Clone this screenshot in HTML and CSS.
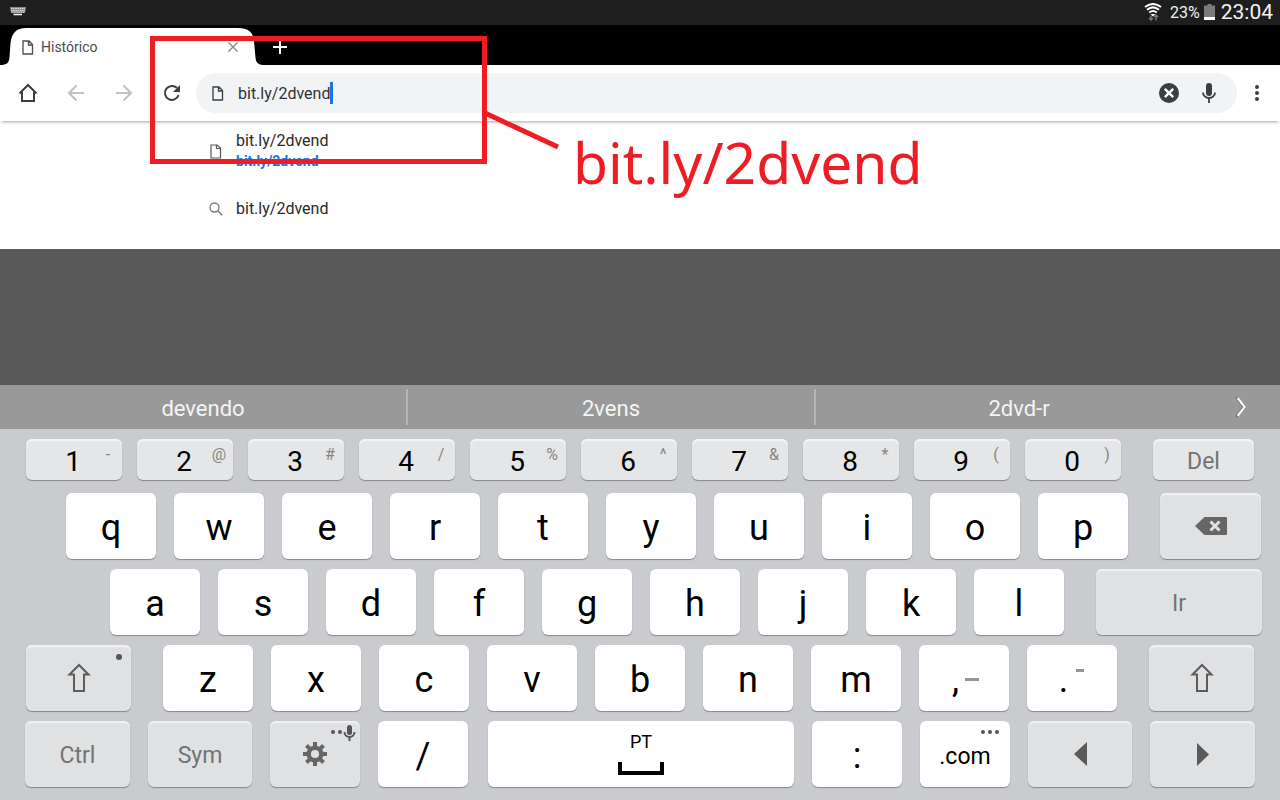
FILE: index.html
```html
<!DOCTYPE html>
<html lang="pt">
<head>
<meta charset="utf-8">
<meta name="viewport" content="width=device-width, initial-scale=1">
<title>Histórico</title>
<link rel="stylesheet" href="styles.css">
</head>
<body>
<div class="screen">
  <header class="status">
    <svg class="status-kbd" width="16" height="9" viewBox="0 0 16 9" aria-hidden="true"><path d="M0 0h16l-1 6H1z" fill="#8d8d8d"/><path d="M1 1.5h14M1 3.5h14M2 5.2h12" stroke="#e2e2e2" stroke-width="1" stroke-dasharray="1.4 .8"/><path d="M3.5 7.5h8.500" stroke="#fff" stroke-width="1.500"/></svg>
    <div class="status-right">
      <svg width="18" height="18" viewBox="0 0 18 18" fill="none" aria-hidden="true"><path d="M1 4Q9-2 17 4M3 6.800Q9 2 15 6.800M5.200 9.500Q9 6.500 12.800 9.500" stroke="#fff" stroke-width="2"/><path d="M6.500 11h5L9 13.500z" fill="#fff"/><path d="M7 17v-4.500M5 15l2 2 2-2M12 17.500V12M10 14l2-2 2 2" stroke="#777" stroke-width="1.500"/></svg>
      <span class="percent">23%</span>
      <svg width="11" height="16" viewBox="0 0 11 16" aria-hidden="true"><path d="M3.500 0h4v1.500H11V16H0V1.500h3.500z" fill="#7b7b7b"/><path d="M0 13h11v3H0z" fill="#fff"/></svg>
      <time class="clock">23:04</time>
    </div>
  </header>

  <nav class="tabs" aria-label="Guias">
    <div class="tab">
      <svg class="tab-shape" width="264" height="37" viewBox="0 0 264 37" aria-hidden="true"><path d="M0 37C7 37 9 35 9.500 29L10.500 15Q12 0 26 0H238Q253 0 254 13L255.500 30Q256 37 263 37Z" fill="#fff"/></svg>
      <div class="tab-content">
        <svg width="12" height="15" viewBox="0 0 12 15" fill="none" stroke="#4a4d51" stroke-width="1.300" aria-hidden="true"><path d="M1 1h6l3.500 3.500V14H1zM6.500 1v4h4"/></svg>
        <span class="tab-title">Histórico</span>
        <button class="plain" type="button" aria-label="Fechar guia"><svg width="12" height="12" viewBox="0 0 12 12" stroke="#85878a" stroke-width="1.400"><path d="M1.500 1.500l9 9M10.500 1.500l-9 9"/></svg></button>
      </div>
    </div>
    <button class="plain new-tab" type="button" aria-label="Nova guia"><svg width="14" height="14" viewBox="0 0 14 14" stroke="#fff" stroke-width="2"><path d="M7 0v14M0 7h14"/></svg></button>
  </nav>

  <div class="toolbar">
    <div class="nav-buttons">
      <button class="plain" type="button" aria-label="Página inicial"><svg width="20" height="20" viewBox="0 0 20 20" fill="none" stroke="#3b3e42" stroke-width="2"><path d="M1.500 10.500L10 2l8.500 8.500M4 9v9h12V9"/></svg></button>
      <button class="plain" type="button" aria-label="Voltar"><svg width="18" height="18" viewBox="0 0 18 18" fill="none" stroke="#c0c1c3" stroke-width="2"><path d="M17 9H2M9.500 1.500L2 9l7.500 7.500"/></svg></button>
      <button class="plain" type="button" aria-label="Avançar"><svg width="18" height="18" viewBox="0 0 18 18" fill="none" stroke="#c0c1c3" stroke-width="2"><path d="M1 9h15M8.500 1.500L16 9l-7.500 7.500"/></svg></button>
      <button class="plain" type="button" aria-label="Recarregar"><svg width="18" height="18" viewBox="0 0 18 18" fill="none"><path d="M15.600 11.200A7 7 0 1 1 14 4" stroke="#3b3e42" stroke-width="2"/><path d="M17 1v7h-7z" fill="#3b3e42"/></svg></button>
    </div>
    <div class="omnibox">
      <svg width="12" height="15" viewBox="0 0 12 15" fill="none" stroke="#3b3e42" stroke-width="1.300" aria-hidden="true"><path d="M1 1h6l3.500 3.500V14H1zM6.500 1v4h4"/></svg>
      <input class="url" type="text" value="bit.ly/2dvend" aria-label="Endereço"><span class="caret"></span>
      <div class="omnibox-actions">
        <button class="plain" type="button" aria-label="Limpar"><svg width="20" height="20" viewBox="0 0 20 20"><circle cx="10" cy="10" r="10" fill="#3b3e42"/><path d="M5.800 5.800l8.400 8.400M14.200 5.800l-8.400 8.400" stroke="#fff" stroke-width="2.400"/></svg></button>
        <button class="plain" type="button" aria-label="Pesquisa por voz"><svg width="14" height="20" viewBox="0 0 14 20" fill="none"><rect x="4" y="0" width="6" height="13" rx="3" fill="#3b3e42"/><path d="M1 9.500a6 5.500 0 0 0 12 0M7 15v5" stroke="#3b3e42" stroke-width="1.800"/></svg></button>
      </div>
    </div>
    <button class="plain menu" type="button" aria-label="Menu"><svg width="4" height="16" viewBox="0 0 4 16" fill="#3b3e42"><circle cx="2" cy="2" r="2"/><circle cx="2" cy="8" r="2"/><circle cx="2" cy="14" r="2"/></svg></button>
  </div>

  <main class="results">
    <a class="result" href="#site">
      <svg width="14" height="15" viewBox="0 0 14 15" fill="none" stroke="#55585c" stroke-width="1.200" aria-hidden="true"><path d="M2 1h6l3.500 3v10H2zM7.500 1v3.500h4"/></svg>
      <span class="result-text"><span class="result-title">bit.ly/2dvend</span><span class="result-url">bit.ly/2dvend</span></span>
    </a>
    <a class="result" href="#busca">
      <svg width="14" height="14" viewBox="0 0 14 14" fill="none" stroke="#77797c" stroke-width="1.300" aria-hidden="true"><circle cx="5.500" cy="5.500" r="4.500"/><path d="M8.700 8.700L13.200 13.200" stroke-width="1.600"/></svg>
      <span class="result-text"><span class="result-title">bit.ly/2dvend</span></span>
    </a>
  </main>

  <div class="scrim"></div>

  <section class="keyboard" aria-label="Teclado">
    <div class="predictions">
      <button class="word" type="button">devendo</button>
      <button class="word" type="button">2vens</button>
      <button class="word" type="button">2dvd-r</button>
      <button class="more" type="button" aria-label="Mais sugestões"><svg width="12" height="22" viewBox="0 0 12 22" fill="none"><path d="M1.500 1.500L8.500 11l-7 9.500" stroke="#444" stroke-width="2"/><path d="M2.500 2L9.500 11l-7 9" stroke="#fff" stroke-width="2.200"/></svg></button>
    </div>

    <div class="row row-numbers">
      <div class="group group-10">
        <button class="key num" type="button">1<span class="hint">-</span></button>
        <button class="key num" type="button">2<span class="hint">@</span></button>
        <button class="key num" type="button">3<span class="hint">#</span></button>
        <button class="key num" type="button">4<span class="hint">/</span></button>
        <button class="key num" type="button">5<span class="hint">%</span></button>
        <button class="key num" type="button">6<span class="hint">^</span></button>
        <button class="key num" type="button">7<span class="hint">&amp;</span></button>
        <button class="key num" type="button">8<span class="hint">*</span></button>
        <button class="key num" type="button">9<span class="hint">(</span></button>
        <button class="key num" type="button">0<span class="hint">)</span></button>
      </div>
      <button class="key pale side-101 label" type="button">Del</button>
    </div>

    <div class="row row-q">
      <div class="group group-q">
        <button class="key" type="button">q</button><button class="key" type="button">w</button><button class="key" type="button">e</button><button class="key" type="button">r</button><button class="key" type="button">t</button><button class="key" type="button">y</button><button class="key" type="button">u</button><button class="key" type="button">i</button><button class="key" type="button">o</button><button class="key" type="button">p</button>
      </div>
      <button class="key fn side-101" type="button" aria-label="Apagar"><svg width="32" height="18" viewBox="0 0 32 18"><path d="M0 9L9.500 0H31q1 0 1 1v16q0 1-1 1H9.500z" fill="#666"/><path d="M15.500 4.500l9 9M24.500 4.500l-9 9" stroke="#e0e1e3" stroke-width="3"/></svg></button>
    </div>

    <div class="row row-a">
      <div class="group group-a">
        <button class="key" type="button">a</button><button class="key" type="button">s</button><button class="key" type="button">d</button><button class="key" type="button">f</button><button class="key" type="button">g</button><button class="key" type="button">h</button><button class="key" type="button">j</button><button class="key" type="button">k</button><button class="key" type="button">l</button>
      </div>
      <button class="key fn side-166 label" type="button">Ir</button>
    </div>

    <div class="row row-z">
      <button class="key fn side-105" type="button" aria-label="Maiúsculas"><svg width="24" height="30" viewBox="0 0 24 30" fill="none" stroke="#5c5c5c" stroke-width="2"><path d="M12 2L2.500 11.500H7V28h10V11.500h4.500z"/></svg><span class="dot"></span></button>
      <div class="group group-a">
        <button class="key" type="button">z</button><button class="key" type="button">x</button><button class="key" type="button">c</button><button class="key" type="button">v</button><button class="key" type="button">b</button><button class="key" type="button">n</button><button class="key" type="button">m</button><button class="key comma" type="button">,<span class="alt dash-long"></span></button><button class="key period" type="button">.<span class="alt dash-short"></span></button>
      </div>
      <button class="key fn side-105" type="button" aria-label="Maiúsculas"><svg width="24" height="30" viewBox="0 0 24 30" fill="none" stroke="#5c5c5c" stroke-width="2"><path d="M12 2L2.500 11.500H7V28h10V11.500h4.500z"/></svg></button>
    </div>

    <div class="row row-space">
      <button class="key fn side-105 label" type="button">Ctrl</button>
      <button class="key fn side-104 label" type="button">Sym</button>
      <button class="key fn" type="button" aria-label="Configurações"><svg width="24" height="24" viewBox="0 0 24 24" fill="none" stroke="#666"><circle cx="12" cy="12" r="6.300" stroke-width="4.500"/><path d="M12 0v4.500M12 19.500V24M0 12h4.500M19.500 12H24M3.500 3.500l3.200 3.200M17.300 17.300l3.200 3.200M3.500 20.500l3.200-3.200M17.300 6.700l3.200-3.200" stroke-width="4"/></svg><svg class="corner corner-mic" width="26" height="16" viewBox="0 0 26 16" fill="#555"><circle cx="3" cy="7" r="2"/><circle cx="10" cy="7" r="2"/><rect x="17" y="0" width="5" height="10" rx="2.500"/><path d="M14.500 7a5 5 0 0 0 10 0M19.500 12v4" fill="none" stroke="#555" stroke-width="2"/></svg></button>
      <button class="key" type="button">/</button>
      <button class="key space" type="button">PT<svg width="46" height="13" viewBox="0 0 46 13" fill="none" stroke="#000" stroke-width="4" aria-hidden="true"><path d="M2 0v11h42V0"/></svg></button>
      <button class="key" type="button">:</button>
      <button class="key com" type="button">.com<svg class="corner corner-dots" width="18" height="4" viewBox="0 0 18 4" fill="#555" aria-hidden="true"><circle cx="2" cy="2" r="2"/><circle cx="9" cy="2" r="2"/><circle cx="16" cy="2" r="2"/></svg></button>
      <button class="key fn side-104" type="button" aria-label="Cursor à esquerda"><svg width="13" height="24" viewBox="0 0 13 24" fill="#5a5a5a"><path d="M13 0v24L0 12z"/></svg></button>
      <button class="key fn side-105" type="button" aria-label="Cursor à direita"><svg width="12" height="23" viewBox="0 0 12 23" fill="#5a5a5a"><path d="M0 0v23l12-11.500z"/></svg></button>
    </div>
  </section>

  <div class="callout-box"></div>
  <svg class="callout-line" width="76" height="40" viewBox="0 0 76 40" aria-hidden="true"><path d="M0 2L73 36" stroke="#ee1c25" stroke-width="5"/></svg>
  <p class="callout-text">bit.ly/2dvend</p>
</div>
</body>
</html>
```

FILE: styles.css
```css
* { box-sizing: border-box; }

body {
  margin: 0;
  font-family: Roboto, "Noto Sans", sans-serif;
  color: #27292c;
}

button { font: inherit; color: inherit; border: 0; cursor: pointer; }

svg { display: block; flex: none; }

.plain {
  display: flex;
  align-items: center;
  justify-content: center;
  padding: 0;
  background: none;
}

.screen {
  position: relative;
  display: flex;
  flex-direction: column;
  min-height: 100vh;
  overflow: hidden;
}

/* Status bar */
.status {
  display: flex;
  align-items: center;
  justify-content: space-between;
  height: 25px;
  padding: 0 7px 2px 10px;
  background: #1e1e1e;
  color: #f2f2f2;
}

.status-right { display: flex; align-items: center; }
.percent { margin: 2px 4px 0 8px; font-size: 16px; }
.clock { margin-left: 6px; font-size: 21px; line-height: 24px; }

/* Tab strip */
.tabs {
  display: flex;
  align-items: flex-end;
  height: 40px;
  background: #000;
}

.tab { display: grid; }
.tab-shape, .tab-content { grid-area: 1 / 1; }

.tab-content {
  display: flex;
  align-items: center;
  gap: 6px;
  padding: 1px 25px 0 22px;
}

.tab-title { flex: 1; padding-left: 1px; font-size: 14px; color: #4a4d51; }
.new-tab { align-self: center; margin: 4px 0 0 9px; }

/* Toolbar */
.toolbar {
  position: relative;
  display: flex;
  align-items: center;
  height: 56px;
  padding-right: 21px;
  background: #fff;
  box-shadow: 0 3px 3px -2px rgba(0, 0, 0, .35);
}

.nav-buttons { display: flex; padding: 0 0 0 4px; }
.nav-buttons .plain { width: 48px; height: 48px; }

.omnibox {
  display: flex;
  flex: 1;
  align-items: center;
  height: 40px;
  padding: 0 21px 0 16px;
  border-radius: 20px;
  background: #f1f3f4;
}

.url {
  width: 92px;
  margin-left: 14px;
  padding: 0;
  border: 0;
  outline: 0;
  background: none;
  font: 16px Roboto, "Noto Sans", sans-serif;
  color: #303236;
}

.caret { width: 3px; height: 22px; background: #1a73e8; }
.omnibox-actions { display: flex; align-items: center; gap: 23px; margin-left: auto; }
.menu { margin-left: 18px; }

/* Suggestions */
.results {
  display: flex;
  flex-direction: column;
  padding-bottom: 12px;
  background: #fefefe;
}

.result {
  display: flex;
  align-items: center;
  gap: 13px;
  min-height: 57px;
  padding: 1px 0 0 209px;
  color: inherit;
  text-decoration: none;
}

.result:first-child { height: 59px; }
.result-text { display: flex; flex-direction: column; }
.result-title { font-size: 16px; line-height: 20px; }
.result-url { font-size: 14px; line-height: 20px; font-weight: 700; color: #1a73e8; }

.scrim { flex: 1; min-height: 40px; background: #595959; }

/* Keyboard */
.keyboard {
  display: flex;
  flex-direction: column;
  gap: 10px;
  padding-bottom: 13px;
  background: #cacbcf;
}

.predictions {
  display: grid;
  grid-template-columns: 408fr 408fr 408fr 56fr;
  height: 44px;
  background: #999;
}

.word {
  position: relative;
  padding: 3px 2px 0 0;
  background: none;
  font-size: 22px;
  color: #f4f4f4;
}

.word:nth-child(-n+2)::after {
  content: "";
  position: absolute;
  top: 4px;
  right: 0;
  bottom: 4px;
  width: 2px;
  background: #b5b5b5;
}

.more { display: flex; align-items: center; padding: 0 0 0 11px; background: none; }

.row { display: flex; gap: 32px; height: 66px; }
.row-numbers { height: 41px; margin-bottom: 3px; padding: 0 26px; }
.row-q { padding: 0 19px 0 66px; }
.row-a { padding: 0 18px 0 110px; }
.row-z { padding: 0 26px; }
.row-space { gap: 18px; padding: 0 25px; }

.group {
  display: grid;
  grid-auto-flow: column;
  grid-auto-columns: minmax(0, 1fr);
  gap: 18px;
}

.group-10 { flex: 1095 1 0; gap: 15px; }
.group-q { flex: 1062 1 0; }
.group-a { flex: 954 1 0; }

.key {
  position: relative;
  display: flex;
  flex: 90 1 0;
  align-items: center;
  justify-content: center;
  min-width: 0;
  padding: 4px 0 0;
  border-radius: 6px;
  background: #fff;
  box-shadow: 0 1px 1px #85868a;
  font-size: 36px;
  line-height: 1;
  color: #000;
}

.num, .pale {
  background: #e5e6e8;
  box-shadow: 0 1px 1px #85868a, inset 0 2px 1px #f5f5f6;
}

.num { padding: 4px 2px 0 0; font-size: 28px; }

.fn {
  padding: 0;
  background: #e0e1e3;
  box-shadow: 0 1px 1px #85868a, inset 0 2px 1px #f1f1f2;
}

.label { padding: 3px 0 0; font-size: 23px; color: #737373; }

.side-101 { flex-grow: 101; }
.side-104 { flex-grow: 104; }
.side-105 { flex-grow: 105; }
.side-166 { flex-grow: 166; }

.hint {
  position: absolute;
  top: 8px;
  right: 4px;
  width: 20px;
  font-size: 16px;
  color: #858585;
}

.dot {
  position: absolute;
  top: 9px;
  right: 9px;
  width: 6px;
  height: 6px;
  border-radius: 50%;
  background: #555;
}

.comma, .period { padding-right: 17px; }
.alt { position: absolute; background: #949494; }
.dash-long { top: 33px; right: 30px; width: 14px; height: 3px; }
.dash-short { top: 24px; right: 33px; width: 8px; height: 3px; }

.space {
  flex-grow: 306;
  flex-direction: column;
  gap: 11px;
  margin-left: 2px;
  padding: 0;
  font-size: 18px;
}

.com { font-size: 23px; }
.corner { position: absolute; }
.corner-mic { top: 4px; right: 4px; }
.corner-dots { top: 9px; right: 11px; }

/* Red callout */
.callout-box, .callout-line, .callout-text { position: absolute; pointer-events: none; }

.callout-box {
  top: 36px;
  left: 150px;
  width: 337px;
  height: 128px;
  border: 5px solid #ee1c25;
}

.callout-line { top: 111px; left: 485px; }

.callout-text {
  top: 134px;
  left: 573px;
  margin: 0;
  font-family: "Noto Sans", sans-serif;
  font-size: 57px;
  line-height: 1;
  color: #ee1c25;
}
```
